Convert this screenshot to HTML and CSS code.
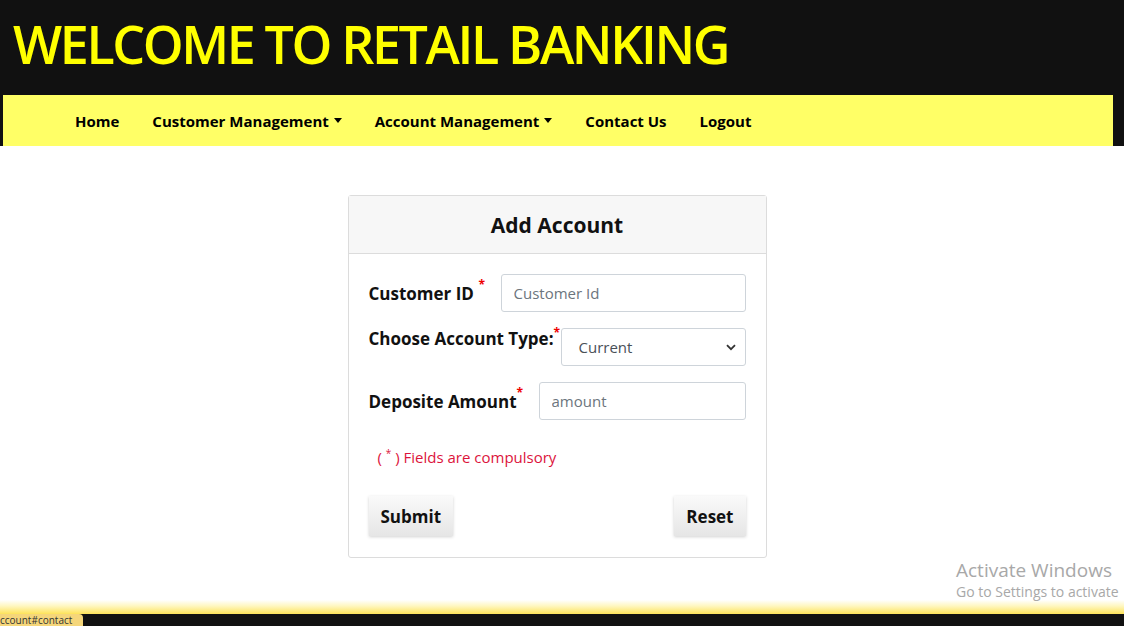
FILE: index.html
```html
<!DOCTYPE html>
<html>
<head>
<meta charset="utf-8">
<link rel="stylesheet" href="styles.css">
</head>
<body>
<header class="top">
  <h1 class="title">WELCOME TO RETAIL BANKING</h1>
  <nav class="nav">
    <a class="nav-item">Home</a>
    <a class="nav-item">Customer Management <span class="caret"></span></a>
    <a class="nav-item">Account Management <span class="caret"></span></a>
    <a class="nav-item">Contact Us</a>
    <a class="nav-item">Logout</a>
  </nav>
</header>
<main class="main">
  <div class="card">
    <div class="card-head">Add Account</div>
    <form class="card-body">
      <div class="row">
        <label class="lbl">Customer ID <sup class="req">*</sup></label>
        <input class="field f-id" type="text" placeholder="Customer Id">
      </div>
      <div class="row row-select">
        <label class="lbl">Choose Account Type:<sup class="req">*</sup></label>
        <div class="select">
          <span>Current</span>
          <svg class="chev" width="10" height="7" viewBox="0 0 10 7"><path d="M1 1.2 L5 5.2 L9 1.2" fill="none" stroke="#333" stroke-width="1.8"/></svg>
        </div>
      </div>
      <div class="row row-amt">
        <label class="lbl">Deposite Amount<sup class="req">*</sup></label>
        <input class="field f-amt" type="text" placeholder="amount">
      </div>
      <p class="note">( <sup>*</sup> ) Fields are compulsory</p>
      <div class="actions">
        <button type="button" class="btn">Submit</button>
        <button type="button" class="btn">Reset</button>
      </div>
    </form>
  </div>
</main>
<footer class="foot"></footer>
<div class="status">ccount#contact</div>
<div class="activate">
  <div class="a1">Activate Windows</div>
  <div class="a2">Go to Settings to activate</div>
</div>
</body>
</html>
```
FILE: styles.css
```css
html, body {
  margin: 0;
  padding: 0;
  height: 626px;
  overflow: hidden;
  background: #fff;
  font-family: "Open Sans", "Noto Sans", sans-serif;
}

.top {
  background: #111111;
}

.title {
  margin: 0;
  height: 95px;
  box-sizing: border-box;
  padding: 12px 0 0 13px;
  color: #ffff00;
  font-weight: 600;
  font-size: 52px;
  line-height: 64px;
  letter-spacing: -2.4px;
}

.nav {
  margin: 0 11px 0 3px;
  height: 51px;
  background: #ffff66;
  display: flex;
  align-items: center;
  padding-left: 72px;
  gap: 33px;
}

.nav-item {
  color: #000;
  font-weight: 700;
  font-size: 15px;
  display: flex;
  align-items: center;
  gap: 5px;
}

.caret {
  width: 0;
  height: 0;
  border-left: 4.5px solid transparent;
  border-right: 4.5px solid transparent;
  border-top: 5px solid #000;
}

.main {
  width: 1114px;
  height: 454px;
  display: flex;
  justify-content: center;
  align-items: flex-start;
  padding-top: 49px;
  box-sizing: border-box;
}

.card {
  width: 419px;
  border: 1px solid #dcdcdc;
  border-radius: 3px;
  box-sizing: border-box;
}

.card-head {
  background: #f7f7f7;
  border-bottom: 1px solid #dcdcdc;
  height: 57px;
  display: flex;
  align-items: center;
  justify-content: center;
  font-weight: 700;
  font-size: 21px;
  color: #111;
}

.card-body {
  padding: 20px 20px 21px 20px;
  margin: 0;
}

.row {
  display: flex;
  align-items: center;
  justify-content: space-between;
  height: 38px;
}

.row-select {
  margin-top: 16px;
  align-items: flex-start;
}

.row-amt {
  margin-top: 16px;
}

.lbl {
  font-weight: 700;
  font-size: 17px;
  color: #111;
}

.req {
  color: #e00;
  font-size: 12px;
  vertical-align: top;
  position: relative;
  top: -6px;
}

.field {
  box-sizing: border-box;
  height: 38px;
  border: 1px solid #ced4da;
  border-radius: 3px;
  padding: 0 12px;
  font-family: inherit;
  font-size: 15px;
  color: #495057;
  outline: none;
}

.field::placeholder {
  color: #6c757d;
}

.f-id {
  width: 245px;
}

.f-amt {
  width: 207px;
}

.select {
  box-sizing: border-box;
  width: 185px;
  height: 38px;
  border: 1px solid #ced4da;
  border-radius: 3px;
  display: flex;
  align-items: center;
  justify-content: space-between;
  padding: 0 9px 0 17px;
  font-size: 15px;
  color: #495057;
}

.row-select .lbl {
  line-height: 22px;
}

.note {
  margin: 26px 0 0 9px;
  color: #dc143c;
  font-size: 15px;
}

.note sup {
  font-size: 10px;
}

.actions {
  display: flex;
  justify-content: space-between;
  margin-top: 29px;
}

.btn {
  height: 40px;
  padding: 0 12px;
  border: none;
  background: linear-gradient(#fafafa, #e6e6e6);
  box-shadow: 0 1px 3px rgba(0,0,0,0.18);
  font-family: inherit;
  font-weight: 700;
  font-size: 17px;
  color: #111;
}

.foot {
  height: 26px;
  background: linear-gradient(#ffffff 0px, #fff7c0 6px, #fde35a 14px, #111 14px);
}

.status {
  position: absolute;
  left: 0;
  bottom: 0;
  height: 12px;
  width: 83px;
  background: #f5d67a;
  border-top-right-radius: 4px;
  font-size: 10px;
  line-height: 13px;
  color: #333;
  white-space: nowrap;
  overflow: hidden;
}

.activate {
  position: absolute;
  left: 956px;
  top: 558px;
  color: #a8a8a8;
  white-space: nowrap;
}

.a1 {
  font-size: 19px;
  line-height: 24px;
}

.a2 {
  font-size: 14px;
  line-height: 20px;
}
```
